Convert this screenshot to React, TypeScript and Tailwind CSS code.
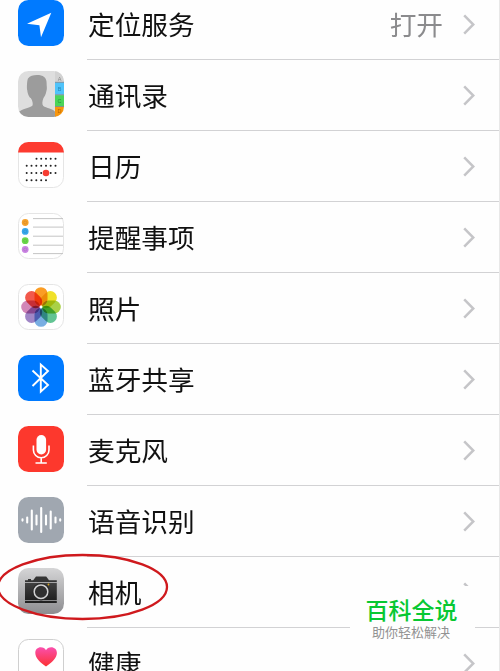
import type { ReactNode } from 'react';

const LocationIcon = () => (
  <>
    <rect width="46" height="46" rx="10.5" fill="#007aff" />
    <path d="M33.3 12.7 9 23.7 21.4 25.2 23 37.3Z" fill="#fff" />
  </>
);

const ContactsIcon = () => (
  <>
    <clipPath id="contacts">
      <rect width="46" height="46" rx="10.5" />
    </clipPath>
    <g clipPath="url(#contacts)">
      <rect width="46" height="46" fill="#dedede" />
      <path
        d="M0 42C3 37.5 13 37 14.5 34.5 15.2 33 14.5 29.5 12.8 27 11 26.5 9.5 22 9.3 19.5 8.5 17 9.2 8.5 10 7.5 12 4.5 15 4 19 4 25 4 28.8 6.5 28.6 12 28.5 15 29.5 17.5 28.3 20.5 27.7 24 26.5 25.5 25.5 27 24.3 30 23.8 33.5 25.3 35 28 37.3 35 37 38 42V46H0Z"
        fill="#9c9c9c"
      />
      <rect x="37" width="9" height="11" fill="#d2d2d2" />
      <rect x="37" y="11.5" width="9" height="12" fill="#4fc3fa" />
      <rect x="37" y="24.2" width="9" height="11" fill="#4ad55a" />
      <rect x="37" y="35.8" width="9" height="11" fill="#f8960c" />
      <path d="M37 11.3h9M37 23.8h9M37 35.5h9" stroke="#567" strokeWidth=".6" />
      <g fontSize="5.5" fontFamily="Liberation Sans, sans-serif" textAnchor="middle">
        <text x="41.5" y="9.5" fill="#888">A</text>
        <text x="41.5" y="19.8" fill="#2586b5">B</text>
        <text x="41.5" y="31.6" fill="#249339">C</text>
        <text x="41.5" y="41.5" fill="#b86400">D</text>
      </g>
    </g>
  </>
);

const calendarDots: [number, number[]][] = [
  [16.7, [18.5, 23.2, 28, 32.7, 37.5]],
  [23.8, [8.7, 13.5, 18.3, 23.2, 28, 32.7, 37.5]],
  [31, [8.7, 13.5, 18.3, 23.2, 28, 32.7, 37.5]],
  [38.2, [8.7, 13.5, 18.3, 23.2, 28]],
];

const CalendarIcon = () => (
  <>
    <clipPath id="calendar">
      <rect width="46" height="46" rx="10.5" />
    </clipPath>
    <rect x=".5" y=".5" width="45" height="45" rx="10" fill="#fff" stroke="#e5e5e5" />
    <rect width="46" height="10.5" fill="#fd3b30" clipPath="url(#calendar)" />
    {calendarDots.map(([y, xs]) => xs.map((x) => <circle key={`${x}-${y}`} cx={x} cy={y} r="1" fill="#222" />))}
    <circle cx="28" cy="31" r="3.3" fill="#f63c32" />
  </>
);

const RemindersIcon = () => (
  <>
    <rect x=".5" y=".5" width="45" height="45" rx="10" fill="#fff" stroke="#e5e5e5" />
    {[5.6, 14.1, 23.2, 32.2, 40.6].map((y) => (
      <path key={y} d={`M15 ${y}H45`} stroke="#bdbdbd" strokeWidth=".9" />
    ))}
    {[
      [9.5, '#f6a22d'],
      [18.4, '#38a8ec'],
      [27.7, '#6bd84b'],
      [36.5, '#ca83e3'],
    ].map(([y, color]) => (
      <g key={color}>
        <circle cx="7.2" cy={y} r="3.4" fill={String(color)} />
        <circle cx="7.2" cy={y} r="1.5" fill="none" stroke="#000" strokeOpacity=".15" strokeWidth=".6" />
      </g>
    ))}
  </>
);

const petals = ['#fb9d24', '#f0e12a', '#a9d146', '#62c493', '#79aee2', '#a086c6', '#d287b8', '#f2594c'];

const PhotosIcon = () => (
  <>
    <rect x=".5" y=".5" width="45" height="45" rx="10" fill="#fff" stroke="#e5e5e5" />
    <g className="isolate">
      {petals.map((color, i) => (
        <rect
          key={color}
          x="16.5"
          y="3.2"
          width="13"
          height="18.8"
          rx="6.5"
          fill={color}
          transform={`rotate(${i * 45} 23 23)`}
          className="mix-blend-multiply"
        />
      ))}
    </g>
    <circle cx="23" cy="23" r="1.4" fill="#fff" />
  </>
);

const BluetoothIcon = () => (
  <>
    <rect width="46" height="46" rx="10.5" fill="#007aff" />
    <path d="M14.5 15.5 30 30 22.8 36.6V9.6L30 16 14.5 31" fill="none" stroke="#fff" strokeWidth="1.9" />
  </>
);

const MicrophoneIcon = () => (
  <>
    <rect width="46" height="46" rx="10.5" fill="#fd382d" />
    <rect x="18.5" y="9" width="9.6" height="19.5" rx="4.8" fill="#fff" />
    <path d="M15.4 19.5V24a7.8 7.8 0 0 0 15.6 0V19.5M23.2 32v5M17.5 37H28.8" fill="none" stroke="#fff" strokeWidth="1.6" />
  </>
);

const SpeechIcon = () => (
  <>
    <rect width="46" height="46" rx="10.5" fill="#a0a7b0" />
    <path
      d="M4.5 22.4v1.2M9.2 20.5v5M13.8 13.5v19M18.5 18.5v9M23.2 11v24M28 18.5v9M32.7 14.5v17M37.5 20.5v5M42.2 22.4v1.2"
      stroke="#fff"
      strokeWidth="2.1"
      strokeLinecap="round"
    />
  </>
);

const CameraIcon = () => (
  <>
    <linearGradient id="metal" x2="0" y2="1">
      <stop stopColor="#d5d5d6" />
      <stop offset="1" stopColor="#8d8d90" />
    </linearGradient>
    <linearGradient id="body" x2="0" y2="1">
      <stop stopColor="#414141" />
      <stop offset="1" stopColor="#202020" />
    </linearGradient>
    <rect width="46" height="46" rx="10.5" fill="url(#metal)" />
    <path d="M7 14V12.2H10V11h3v1.2h2.2L18 8.4h10.2L31 12.2h7.8V14Z" fill="#343434" />
    <rect x="7" y="14.8" width="31.8" height="17.4" fill="url(#body)" />
    <path d="M7 33h31.8v2H7Z" fill="#222" />
    <circle cx="23" cy="23.7" r="8.7" fill="#292929" />
    <circle cx="23" cy="23.7" r="6.8" fill="#303030" stroke="#d2d2d3" strokeWidth="1.5" />
    <circle cx="30.5" cy="16.5" r=".9" fill="#d8a51d" />
  </>
);

const HealthIcon = () => (
  <>
    <linearGradient id="heart" x2="0" y2="1">
      <stop stopColor="#fa4fad" />
      <stop offset="1" stopColor="#fc3132" />
    </linearGradient>
    <rect x=".5" y=".5" width="45" height="45" rx="10" fill="#fff" stroke="#cfcfcf" />
    <path
      d="M28 27.5C22.5 24 17.3 19 17.3 14 17.3 10.5 19.7 8.3 22.7 8.3 25.2 8.3 27.2 9.5 28 11.3 28.9 9.5 30.8 8.3 33.3 8.3 36.3 8.3 38.9 10.5 38.9 14 38.9 19 33.5 24 28 27.5Z"
      fill="url(#heart)"
    />
  </>
);

const rows: { label: string; icon: ReactNode; value?: string }[] = [
  { label: '定位服务', icon: <LocationIcon />, value: '打开' },
  { label: '通讯录', icon: <ContactsIcon /> },
  { label: '日历', icon: <CalendarIcon /> },
  { label: '提醒事项', icon: <RemindersIcon /> },
  { label: '照片', icon: <PhotosIcon /> },
  { label: '蓝牙共享', icon: <BluetoothIcon /> },
  { label: '麦克风', icon: <MicrophoneIcon /> },
  { label: '语音识别', icon: <SpeechIcon /> },
  { label: '相机', icon: <CameraIcon /> },
  { label: '健康', icon: <HealthIcon /> },
];

export default function App() {
  return (
    <main className="relative h-[671px] w-[500px] overflow-hidden border-r border-[#e8e8e8] bg-[#fefefe] font-['Noto_Sans_CJK_SC',sans-serif] text-[#111]">
      <ul className="-mt-[11px]">
        {rows.map(({ label, icon, value }) => (
          <li key={label} className="flex h-[71px] pl-[18px]">
            <svg viewBox="0 0 46 46" className="mt-[11px] size-[46px] shrink-0" aria-hidden="true">
              {icon}
            </svg>
            <div className="ml-[23px] flex flex-1 items-center border-b border-[#d2d2d4] pr-6">
              <span className="pl-px text-[26.7px] leading-10">{label}</span>
              <span className="mr-5 ml-auto text-[26.7px] leading-10 text-[#8b8b8d]">{value}</span>
              <svg viewBox="0 0 12 22" className="h-[22px] w-3 shrink-0" aria-hidden="true">
                <path d="M1.2 2.4 10.3 11.5 1.2 20.6" fill="none" stroke="#c5c5c8" strokeWidth="2.5" />
              </svg>
            </div>
          </li>
        ))}
      </ul>
      <svg viewBox="0 0 170 70" className="absolute top-[552px] left-0 h-[70px] w-[170px]" aria-hidden="true">
        <ellipse cx="82.5" cy="35" rx="84.5" ry="32" fill="none" stroke="#cf191d" strokeWidth="2.3" />
      </svg>
      <aside className="absolute top-[586px] left-[350px] flex h-[65px] w-[125px] flex-col bg-[#fefefe] pt-[9px]">
        <strong className="pl-[15.5px] text-[23px] leading-7 font-medium text-[#08c832]">百科全说</strong>
        <span className="pl-[22px] text-[13px] leading-[18px] text-[#929292]">助你轻松解决</span>
      </aside>
    </main>
  );
}
